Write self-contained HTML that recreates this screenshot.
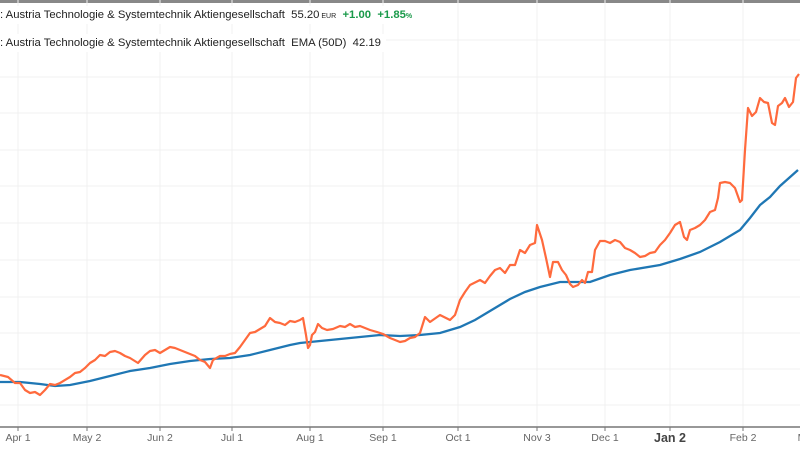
<!DOCTYPE html>
<html><head><meta charset="utf-8"><style>
body{margin:0;width:800px;height:450px;background:#fff;overflow:hidden;font-family:"Liberation Sans",sans-serif;position:relative}
.lg{position:absolute;left:0;background:#fff;font-size:11.3px;color:#222;white-space:nowrap;padding:0 5px 0 0;height:18px;line-height:18px}
.g{color:#1a9a4a;font-weight:bold}
.ax{position:absolute;top:432px;font-size:10.5px;color:#666;transform:translateX(-50%)}
</style></head><body>
<svg width="800" height="450" style="position:absolute;left:0;top:0">
<rect x="0" y="0" width="800" height="3" fill="#888"/>
<g stroke="#f0f0f0" stroke-width="1">
<line x1="0" y1="40" x2="800" y2="40"/><line x1="0" y1="77" x2="800" y2="77"/><line x1="0" y1="113" x2="800" y2="113"/><line x1="0" y1="150" x2="800" y2="150"/><line x1="0" y1="186" x2="800" y2="186"/><line x1="0" y1="223" x2="800" y2="223"/><line x1="0" y1="260" x2="800" y2="260"/><line x1="0" y1="297" x2="800" y2="297"/><line x1="0" y1="333" x2="800" y2="333"/><line x1="0" y1="369" x2="800" y2="369"/><line x1="0" y1="405" x2="800" y2="405"/>
<line x1="18" y1="0" x2="18" y2="427"/><line x1="87" y1="0" x2="87" y2="427"/><line x1="160" y1="0" x2="160" y2="427"/><line x1="232" y1="0" x2="232" y2="427"/><line x1="310" y1="0" x2="310" y2="427"/><line x1="383" y1="0" x2="383" y2="427"/><line x1="458" y1="0" x2="458" y2="427"/><line x1="537" y1="0" x2="537" y2="427"/><line x1="605" y1="0" x2="605" y2="427"/><line x1="670" y1="0" x2="670" y2="427"/><line x1="743" y1="0" x2="743" y2="427"/>
</g>
<line x1="0" y1="427" x2="800" y2="427" stroke="#777" stroke-width="1.5"/>
<g stroke="#777" stroke-width="1"><line x1="18" y1="427" x2="18" y2="431"/><line x1="87" y1="427" x2="87" y2="431"/><line x1="160" y1="427" x2="160" y2="431"/><line x1="232" y1="427" x2="232" y2="431"/><line x1="310" y1="427" x2="310" y2="431"/><line x1="383" y1="427" x2="383" y2="431"/><line x1="458" y1="427" x2="458" y2="431"/><line x1="537" y1="427" x2="537" y2="431"/><line x1="605" y1="427" x2="605" y2="431"/><line x1="670" y1="427" x2="670" y2="431"/><line x1="743" y1="427" x2="743" y2="431"/></g>
<polyline fill="none" stroke="#1f77b4" stroke-width="2.3" points="0,382 20,382 40,384 55,386 70,385 90,381 110,376 130,371 150,368 170,364 190,361 210,359 230,358 250,355 270,350 290,345 300,343 320,341 340,339 360,337 380,335 400,336 420,335 440,333 460,327 475,320 490,311 510,299 525,292 540,287 560,282 590,282 610,275 630,270 660,265 680,259 700,252 720,242 740,230 750,218 760,205 770,197 780,186 798,170"/>
<polyline fill="none" stroke="#ff6a3d" stroke-width="2.2" stroke-linejoin="round" points="0,375 8,377 15,383 20,383 25,390 30,393 35,392 40,395 45,390 50,384 55,385 60,383 70,377 75,373 80,372 85,368 90,363 95,360 100,355 105,356 110,352 115,351 120,353 125,356 130,358 138,363 145,355 150,351 155,350 160,353 165,350 170,347 175,348 180,350 185,352 195,356 200,360 205,362 210,368 213,360 220,356 225,356 230,354 235,353 240,347 245,340 250,333 255,332 260,329 265,326 270,318 275,322 280,323 285,325 290,321 295,322 300,320 303,318 306,335 308,348 310,345 312,335 315,332 318,324 322,328 327,330 333,329 340,326 345,327 350,324 355,327 360,326 365,328 370,330 377,332 383,334 390,338 395,340 400,342 405,341 410,338 415,337 420,333 425,317 430,322 440,315 450,320 455,315 460,300 465,292 470,285 480,280 485,283 490,276 495,270 500,268 505,273 510,265 515,265 520,250 525,253 530,245 535,243 537,225 542,240 546,258 550,277 553,262 558,262 562,270 566,275 570,284 573,287 578,285 582,280 585,283 588,272 592,272 595,250 600,241 605,241 610,243 615,240 620,242 625,248 630,250 635,253 640,257 645,256 650,253 655,252 660,245 665,240 670,233 675,225 680,222 684,237 687,240 690,230 695,228 700,225 705,220 710,212 715,210 718,198 720,183 725,182 730,183 735,188 740,202 742,200 745,150 748,108 752,116 756,112 760,98 764,102 768,103 772,123 775,125 778,106 782,103 785,98 789,107 793,102 796,78 799,74"/>
</svg>
<div class="lg" style="top:6px">: Austria Technologie &amp; Systemtechnik Aktiengesellschaft&nbsp;&nbsp;55.20<span style="font-size:7px"> EUR</span>&nbsp;&nbsp;<span class="g">+1.00&nbsp;&nbsp;+1.85<span style="font-size:7px">%</span></span></div>
<div class="lg" style="top:34px">: Austria Technologie &amp; Systemtechnik Aktiengesellschaft&nbsp;&nbsp;EMA (50D)&nbsp;&nbsp;42.19</div>
<div class="ax" style="left:18px">Apr 1</div><div class="ax" style="left:87px">May 2</div><div class="ax" style="left:160px">Jun 2</div><div class="ax" style="left:232px">Jul 1</div><div class="ax" style="left:310px">Aug 1</div><div class="ax" style="left:383px">Sep 1</div><div class="ax" style="left:458px">Oct 1</div><div class="ax" style="left:537px">Nov 3</div><div class="ax" style="left:605px">Dec 1</div><div class="ax" style="left:670px;font-size:12.5px;font-weight:bold;color:#444;top:431px">Jan 2</div><div class="ax" style="left:743px">Feb 2</div><div class="ax" style="left:802px">M</div>
</body></html>
